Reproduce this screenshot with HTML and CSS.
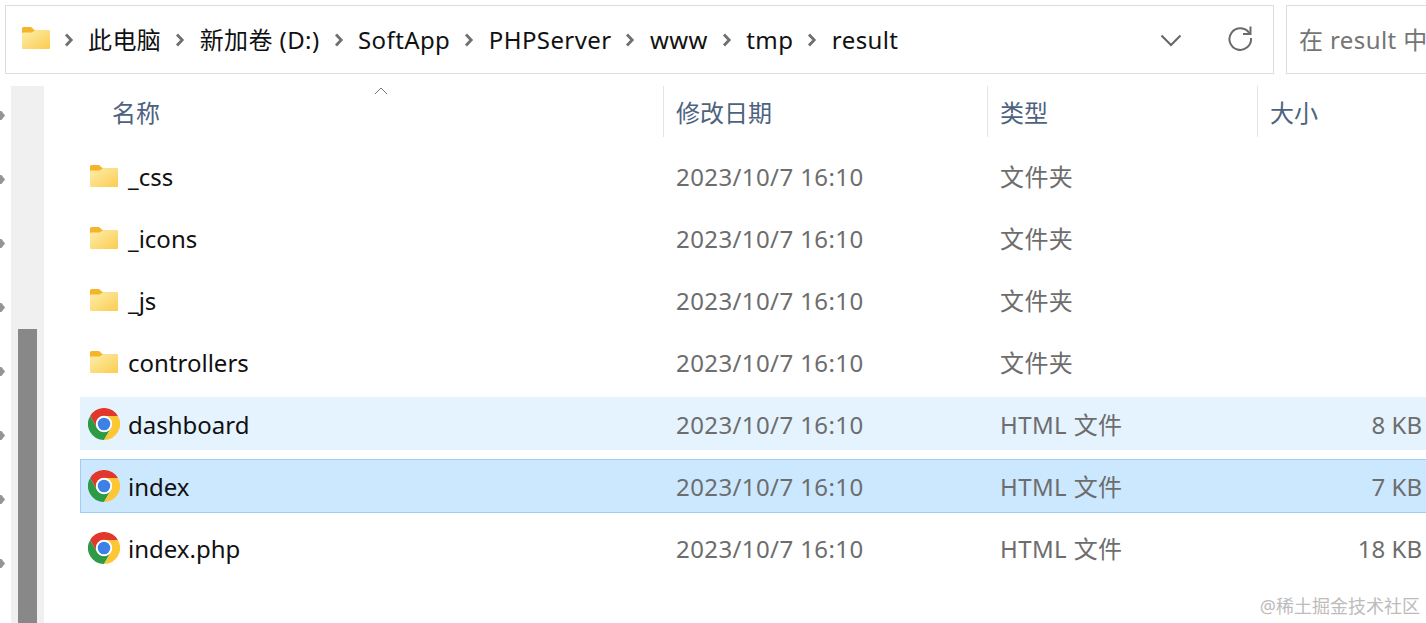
FILE: index.html
```html
<!DOCTYPE html>
<html lang="zh-CN">
<head>
<meta charset="utf-8">
<title>result</title>
<link rel="stylesheet" href="styles.css">
</head>
<body>
<svg class="defs" width="0" height="0" aria-hidden="true">
  <defs>
    <linearGradient id="fg" x1="0" y1="0" x2="1" y2="1">
      <stop offset="0" stop-color="#fdeeab"/>
      <stop offset="1" stop-color="#fbcc50"/>
    </linearGradient>
    <symbol id="folder" viewBox="0 0 28 22">
      <path d="M0 1.500A1.500 1.500 0 0 1 1.500 0H9l4 3.500H27A1 1 0 0 1 28 4.500V8H0Z" fill="#f4b52a"/>
      <path d="M0 21V6.500L1 5.500H9.500L13 3.500H27A1 1 0 0 1 28 4.500V21A1 1 0 0 1 27 22H1A1 1 0 0 1 0 21Z" fill="url(#fg)"/>
    </symbol>
    <symbol id="chrome" viewBox="0 0 48 48">
      <path d="M24 12H44.800A24 24 0 0 0 3.200 12L13.600 30A12 12 0 0 1 24 12Z" fill="#e2382c"/>
      <path d="M34.400 30L24 48A24 24 0 0 1 3.200 12L13.600 30A12 12 0 0 0 34.400 30Z" fill="#2f9a45"/>
      <path d="M24 12H44.800A24 24 0 0 1 24 48L34.400 30A12 12 0 0 0 24 12Z" fill="#fcc634"/>
      <circle cx="24" cy="24" r="12.200" fill="#fff"/>
      <circle cx="24" cy="24" r="9.400" fill="#3d80e6"/>
    </symbol>
    <symbol id="chev" viewBox="0 0 10 14">
      <path d="M2 1.500l5.200 5.500-5.200 5.500" fill="none" stroke="#6f6f6f" stroke-width="2.800"/>
    </symbol>
  </defs>
</svg>

<div class="toolbar">
  <div class="address">
    <svg class="addr-folder"><use href="#folder"/></svg>
    <div class="crumbs">
      <svg class="crumb-sep"><use href="#chev"/></svg><span class="crumb">此电脑</span>
      <svg class="crumb-sep"><use href="#chev"/></svg><span class="crumb">新加卷 (D:)</span>
      <svg class="crumb-sep"><use href="#chev"/></svg><span class="crumb">SoftApp</span>
      <svg class="crumb-sep"><use href="#chev"/></svg><span class="crumb">PHPServer</span>
      <svg class="crumb-sep"><use href="#chev"/></svg><span class="crumb">www</span>
      <svg class="crumb-sep"><use href="#chev"/></svg><span class="crumb">tmp</span>
      <svg class="crumb-sep"><use href="#chev"/></svg><span class="crumb">result</span>
    </div>
    <svg class="addr-down" viewBox="0 0 22 14"><path d="M1.500 2.500L11 12l9.500-9.500" fill="none" stroke="#666" stroke-width="2"/></svg>
    <svg class="addr-refresh" viewBox="0 0 26 26"><path d="M22.500 8.500A10.800 10.800 0 1 0 24 13" fill="none" stroke="#6a6a6a" stroke-width="2"/><path d="M23.500 1.500V9H16" fill="none" stroke="#6a6a6a" stroke-width="2"/></svg>
  </div>
  <div class="search">在 result 中</div>
</div>

<div class="main">
  <div class="rail">
    <div class="tree-marks">
      <i class="mark"></i><i class="mark"></i><i class="mark"></i><i class="mark"></i>
      <i class="mark"></i><i class="mark"></i><i class="mark"></i><i class="mark"></i>
    </div>
    <div class="track"><div class="thumb"></div></div>
  </div>

  <div class="list">
    <div class="head">
      <div class="hcell hname">名称<svg class="sort" viewBox="0 0 14 8"><path d="M1 7l6-6 6 6" fill="none" stroke="#777" stroke-width="1"/></svg></div>
      <div class="hcell hdate">修改日期</div>
      <div class="hcell htype">类型</div>
      <div class="hcell hsize">大小</div>
    </div>
    <div class="rows">
      <div class="row"><svg class="ico-folder"><use href="#folder"/></svg><span class="name">_css</span><span class="cell">2023/10/7 16:10</span><span class="cell">文件夹</span><span class="cell size"></span></div>
      <div class="row"><svg class="ico-folder"><use href="#folder"/></svg><span class="name">_icons</span><span class="cell">2023/10/7 16:10</span><span class="cell">文件夹</span><span class="cell size"></span></div>
      <div class="row"><svg class="ico-folder"><use href="#folder"/></svg><span class="name">_js</span><span class="cell">2023/10/7 16:10</span><span class="cell">文件夹</span><span class="cell size"></span></div>
      <div class="row"><svg class="ico-folder"><use href="#folder"/></svg><span class="name">controllers</span><span class="cell">2023/10/7 16:10</span><span class="cell">文件夹</span><span class="cell size"></span></div>
      <div class="row hover"><svg class="ico-chrome"><use href="#chrome"/></svg><span class="name">dashboard</span><span class="cell">2023/10/7 16:10</span><span class="cell">HTML 文件</span><span class="cell size">8 KB</span></div>
      <div class="row selected"><svg class="ico-chrome"><use href="#chrome"/></svg><span class="name">index</span><span class="cell">2023/10/7 16:10</span><span class="cell">HTML 文件</span><span class="cell size">7 KB</span></div>
      <div class="row"><svg class="ico-chrome"><use href="#chrome"/></svg><span class="name">index.php</span><span class="cell">2023/10/7 16:10</span><span class="cell">HTML 文件</span><span class="cell size">18 KB</span></div>
    </div>
  </div>
</div>

<div class="watermark">@稀土掘金技术社区</div>
</body>
</html>
```
FILE: styles.css
```css
* { box-sizing: border-box; }
html, body { margin: 0; height: 100%; }
body {
  position: relative;
  width: 1426px;
  height: 623px;
  overflow: hidden;
  background: #fff;
  color: #111;
  font-family: "Noto Sans", "Noto Sans CJK SC", sans-serif;
  font-size: 24px;
}
.defs { position: absolute; }

.toolbar {
  display: flex;
  gap: 12px;
  padding: 5px 0 0 5px;
  height: 74px;
}
.address {
  flex: none;
  width: 1269px;
  display: flex;
  align-items: center;
  padding: 0 20px 0 16px;
  border: 1px solid #dcdcdc;
}
.addr-folder { width: 28px; height: 22px; flex: none; margin-top: -3px; }
.crumbs { display: flex; align-items: center; flex: 1; line-height: 1; letter-spacing: 0.4px; }
.crumb { white-space: nowrap; }
.crumb-sep { width: 10px; height: 14px; flex: none; margin: 0 14.500px 0 14px; }
.crumb-sep:first-child { margin: 0 14px 0 14px; }
.addr-down { width: 22px; height: 14px; flex: none; margin-right: 45px; }
.addr-refresh { width: 26px; height: 26px; flex: none; margin-top: -4px; }
.search {
  flex: 1;
  min-width: 0;
  border: 1px solid #dcdcdc;
  border-right: 0;
  padding: 0 0 2px 12px;
  display: flex;
  align-items: center;
  white-space: nowrap;
  overflow: hidden;
  color: #757575;
  letter-spacing: 0.4px;
}

.main { display: flex; margin-top: 12px; height: 537px; }
.rail { flex: none; width: 48px; display: flex; }
.tree-marks {
  width: 11px;
  flex: none;
  display: flex;
  flex-direction: column;
  gap: 55px;
  padding-top: 25px;
}
.mark {
  display: block;
  width: 5px;
  height: 9px;
  background: #959595;
  clip-path: polygon(0 0, 30% 0, 100% 50%, 30% 100%, 0 100%);
}
.track { width: 33px; background: #f0f0f0; padding: 243px 7px 0; margin-right: 4px; }
.thumb { width: 19px; height: 294px; background: #888; }

.list { flex: 1; min-width: 0; }
.head { display: flex; height: 51px; color: #4d6280; line-height: 53px; }
.hcell { flex: none; padding-left: 12px; border-left: 1px solid #e5e5e5; }
.hname { position: relative; width: 615px; padding-left: 64px; border-left: 0; }
.hdate { width: 324px; }
.htype { width: 270px; }
.hsize { flex: 1; }
.sort { position: absolute; left: 326px; top: 1px; width: 14px; height: 8px; }

.rows { display: flex; flex-direction: column; gap: 9px; padding: 12px 0 0 32px; }
.row {
  display: grid;
  grid-template-columns: 40px 548px 324px 1fr 140px;
  align-items: center;
  height: 53px;
  padding: 3px 4px 0 8px;
  line-height: 50px;
}
.hover { background: #e5f3ff; }
.selected { height: 54px; margin-bottom: -1px; background: #cce8ff; border: 1px solid #a3cdf0; border-right: 0; padding: 1px 4px 0 7px; line-height: 49px; }
.ico-folder { width: 28px; height: 22px; margin-left: 2px; margin-top: -3px; }
.ico-chrome { width: 32px; height: 32px; margin-top: -2px; }
.name { white-space: nowrap; }
.cell { color: #6d6d6d; white-space: nowrap; letter-spacing: 0.4px; }
.size { text-align: right; letter-spacing: 0; }

.watermark {
  position: absolute;
  right: 6px;
  bottom: 6px;
  color: #bcbcbc;
  font-size: 18px;
  line-height: 22px;
}
```
